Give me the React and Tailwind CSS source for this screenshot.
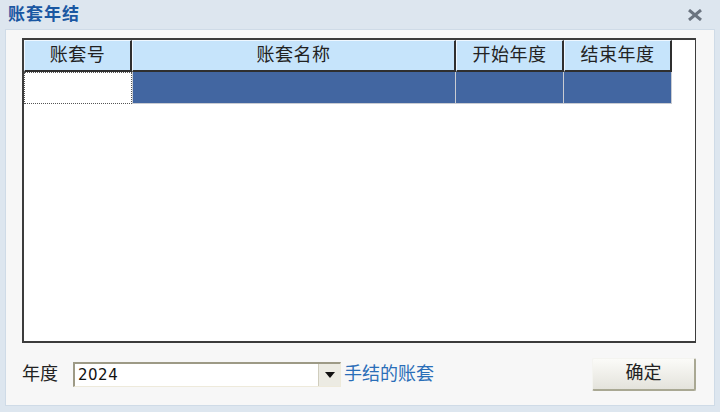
import React from "react";

const font = { fontFamily: '"Liberation Sans", "Noto Sans CJK SC", sans-serif' };

const columns = [
  { key: "code", label: "账套号", width: "w-[108px]" },
  { key: "name", label: "账套名称", width: "w-[324px]" },
  { key: "start", label: "开始年度", width: "w-[108px]" },
  { key: "end", label: "结束年度", width: "w-[108px]" },
];

export default function App() {
  return (
    <div style={font} className="w-[720px] h-[412px] bg-[#dde6ef] flex flex-col overflow-hidden">
      {/* title bar */}
      <div className="h-[29px] flex items-center justify-between pl-[8px] pr-[18px] shrink-0">
        <span className="text-[17px] font-bold text-[#1a57a2] tracking-[1px]">账套年结</span>
        <svg width="14" height="12" viewBox="0 0 14 12">
          <path d="M1 1 L13 11 M13 1 L1 11" stroke="#6b7480" strokeWidth="3" />
        </svg>
      </div>

      {/* body */}
      <div className="mx-[5px] h-[377px] bg-[#f7f7f7] border border-[#cfdbe7] flex flex-col pl-[16px] pr-[18px] pt-[8px]">
        <div className="h-[305px] bg-white border-[2px] border-[#3c3c3c] border-r-[1px] border-b-[2px] flex flex-col">
          <div className="flex h-[32px]">
            {columns.map((c) => (
              <div
                key={c.key}
                className={`${c.width} h-full bg-[#c6e4fb] border-t border-l border-[#eef7ff] border-r-[2px] border-b-[2px] border-r-[#2f2f2f] border-b-[#2f2f2f] flex items-center justify-center text-[18px] tracking-[0.5px] text-[#222]`}
              >
                {c.label}
              </div>
            ))}
          </div>
          <div className="flex h-[32px]">
            <div className="w-[108px] h-full bg-white border border-dotted border-[#555]" />
            <div className="w-[324px] h-full bg-[#4266a1] border-l border-r border-b border-[#c9ccd2]" />
            <div className="w-[108px] h-full bg-[#4266a1] border-r border-b border-[#c9ccd2]" />
            <div className="w-[108px] h-full bg-[#4266a1] border-r border-b border-[#c9ccd2]" />
          </div>
        </div>

        {/* footer */}
        <div className="flex items-center mt-[14px] h-[34px]">
          <span className="text-[18px] text-[#222] w-[51px]">年度</span>
          <div className="w-[268px] h-[25px] flex bg-white border-t-[2px] border-l-[2px] border-[#9d9a86] border-b border-r border-b-[#eeeadb] border-r-[#eeeadb]">
            <span
              style={{ fontFamily: '"DejaVu Sans", sans-serif' }}
              className="flex-1 text-[15px] tracking-[0.5px] text-[#111] leading-[22px] pl-[3px]"
            >
              2024
            </span>
            <div className="w-[22px] h-full bg-[#ecebe3] border-l border-[#d0cdbd] flex items-center justify-center">
              <svg width="10" height="6" viewBox="0 0 10 6">
                <path d="M0 0 L10 0 L5 6 Z" fill="#111" />
              </svg>
            </div>
          </div>
          <span className="ml-[3px] text-[18px] text-[#2a6eb8]">手结的账套</span>
          <button className="ml-auto w-[104px] h-[33px] text-[18px] text-[#222] bg-gradient-to-b from-[#fbfbf8] to-[#e4e3dc] border-t border-l border-[#f4f4f0] border-r-[2px] border-b-[2px] border-r-[#a9a893] border-b-[#a9a893] rounded-[2px]">
            确定
          </button>
        </div>
      </div>
    </div>
  );
}
